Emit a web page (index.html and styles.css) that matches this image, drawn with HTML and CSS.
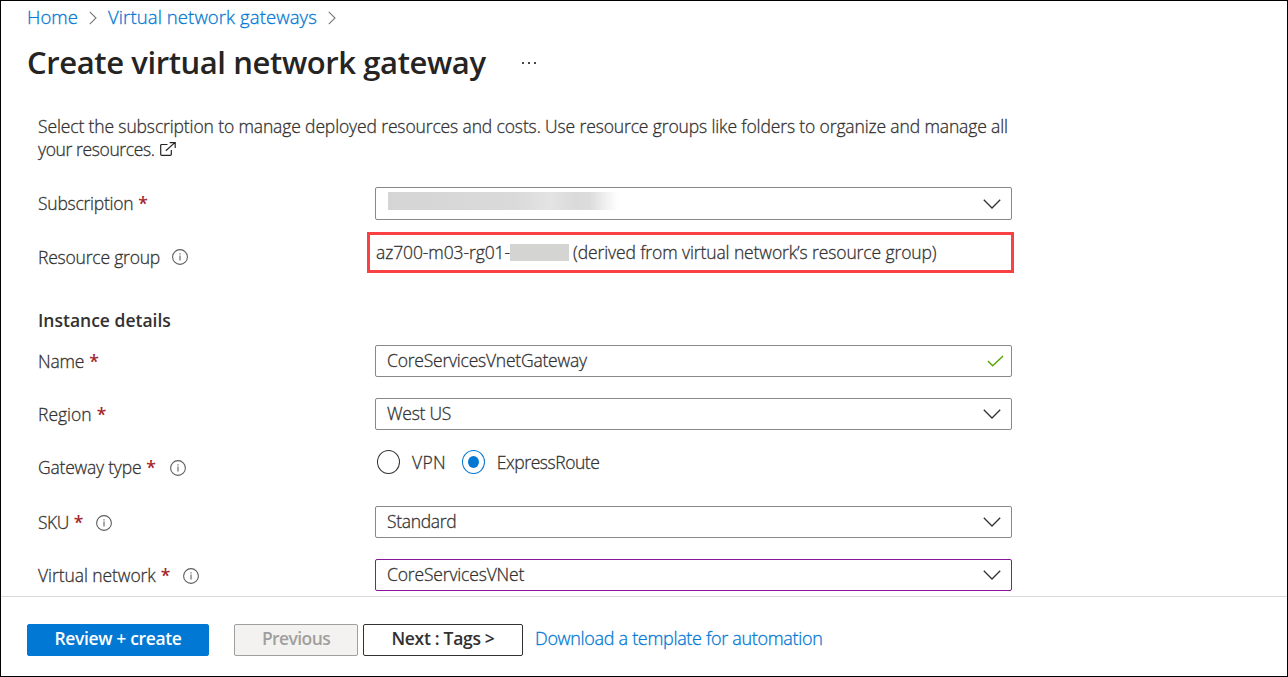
FILE: index.html
```html
<!DOCTYPE html>
<html lang="en">
<head>
<meta charset="utf-8">
<title>Create virtual network gateway</title>
<link rel="stylesheet" href="styles.css">
</head>
<body>
<svg class="defs" width="0" height="0">
  <symbol id="info" viewBox="0 0 16 16"><circle cx="8" cy="8" r="7.4" fill="none" stroke="#605e5c" stroke-width="1.1"/><path d="M8 6.6V11.6M8 4.2V5.5" stroke="#605e5c" stroke-width="1.1"/></symbol>
  <symbol id="down" viewBox="0 0 18 10"><path d="M.8.8 9 9 17.2.8" fill="none" stroke="#323130" stroke-width="1.3"/></symbol>
  <symbol id="crumb" viewBox="0 0 8 14"><path d="M.8.8 7 7 .8 13.2" fill="none" stroke="#7a7876" stroke-width="1.1"/></symbol>
</svg>
<div class="page">
  <nav class="crumbs">
    <a class="crumb-home">Home</a><svg class="crumb-sep"><use href="#crumb"/></svg><a class="crumb-list">Virtual network gateways</a><svg class="crumb-sep"><use href="#crumb"/></svg>
  </nav>
  <header class="heading">
    <h1 class="title">Create virtual network gateway</h1>
    <svg class="more" width="16" height="4" viewBox="0 0 16 4"><path d="M1 1h2v2H1zM7 1h2v2H7zM13 1h2v2h-2z" fill="#484644"/></svg>
  </header>
  <main class="form">
    <p class="intro"><span class="intro-first">Select the subscription to manage deployed resources and costs. Use resource groups like folders to organize and manage all</span><br><span class="intro-second">your resources.</span><svg class="external" width="16" height="14" viewBox="0 0 16 14"><path d="M7.5 2.5H1.7Q.7 2.5.7 3.5v8.8q0 1 1 1h8.6q1 0 1-1V8M5.8 8.8 14.6.9M9.7.7h5.5v5.2" fill="none" stroke="#252423" stroke-width="1.2"/></svg></p>
    <div class="row row-subscription">
      <div class="label"><span class="t-subscription">Subscription</span><span class="req">*</span></div>
      <div class="field"><span class="redacted-name"></span><svg class="down"><use href="#down"/></svg></div>
    </div>
    <div class="row row-group">
      <div class="label"><span class="t-group">Resource group</span><svg class="info"><use href="#info"/></svg></div>
      <div class="highlight"><span class="value t-rg">az700-m03-rg01-</span><span class="redacted-id"></span><span class="value t-derived">(derived from virtual network’s resource group)</span></div>
    </div>
    <h2 class="section">Instance details</h2>
    <div class="row row-name">
      <div class="label"><span class="t-name">Name</span><span class="req">*</span></div>
      <div class="field"><span class="value v-name">CoreServicesVnetGateway</span><svg class="check" viewBox="0 0 18 12"><path d="M1 6 6 11 17 .8" fill="none" stroke="#57a300" stroke-width="1.5"/></svg></div>
    </div>
    <div class="row row-region">
      <div class="label"><span class="t-region">Region</span><span class="req">*</span></div>
      <div class="field"><span class="value v-region">West US</span><svg class="down"><use href="#down"/></svg></div>
    </div>
    <div class="row row-type">
      <div class="label"><span class="t-type">Gateway type</span><span class="req">*</span><svg class="info"><use href="#info"/></svg></div>
      <div class="radios"><span class="radio"></span><span class="v-vpn">VPN</span><span class="radio radio-on"></span><span class="v-express">ExpressRoute</span></div>
    </div>
    <div class="row row-sku">
      <div class="label"><span class="t-sku">SKU</span><span class="req">*</span><svg class="info"><use href="#info"/></svg></div>
      <div class="field"><span class="value v-sku">Standard</span><svg class="down"><use href="#down"/></svg></div>
    </div>
    <div class="row row-vnet">
      <div class="label"><span class="t-vnet">Virtual network</span><span class="req">*</span><svg class="info"><use href="#info"/></svg></div>
      <div class="field field-changed"><span class="value v-vnet">CoreServicesVNet</span><svg class="down"><use href="#down"/></svg></div>
    </div>
  </main>
  <footer class="actions">
    <button class="btn btn-primary"><span class="b-review">Review + create</span></button>
    <button class="btn btn-disabled" disabled><span class="b-prev">Previous</span></button>
    <button class="btn btn-next"><span class="b-next">Next : Tags &gt;</span></button>
    <a class="download">Download a template for automation</a>
  </footer>
</div>
</body>
</html>
```
FILE: styles.css
```css
* { box-sizing: border-box; }
body { margin: 0; font-family: "Open Sans", "Noto Sans", sans-serif; font-size: 17.5px; font-weight: 300; -webkit-text-stroke: .28px; color: #323130; background: #fff; }
.defs { position: absolute; }
.page { height: 677px; border: 1px solid #000; display: flex; flex-direction: column; overflow: hidden; white-space: nowrap; }
a { color: #0078d4; }
.crumbs { display: flex; align-items: center; height: 34px; padding: 0 0 2px 26px; font-size: 18.5px; letter-spacing: .1px; }
.crumbs a { line-height: 30px; }
.crumb-sep { width: 8px; height: 14px; margin: 2px 11px 0 11px; }
.heading { display: flex; align-items: center; height: 56px; padding-left: 26px; }
.title { margin: 0; width: 494px; font-size: 31px; font-weight: 600; -webkit-text-stroke: 0; letter-spacing: -.4px; color: #252423; line-height: 54px; padding-bottom: 2px; }
.form { flex: 1; padding: 24px 0 0 37px; }
.intro { margin: 0; line-height: 23px; height: 46px; }
.intro-first { letter-spacing: -.13px; }
.intro-second { letter-spacing: -.38px; }
.external { margin-left: 5px; vertical-align: 0; }
.row { display: grid; grid-template-columns: 337px 637px; align-items: start; }
.label { display: flex; align-items: center; height: 32px; }
.req { color: #a4262c; font-weight: 600; -webkit-text-stroke: 0; margin-left: 5px; }
.info { width: 16px; height: 16px; margin-left: 13px; position: relative; top: 1px; }
.field { display: flex; align-items: center; justify-content: space-between; height: 32px; border: 1px solid #8a8886; border-radius: 2px; padding: 0 11px; }
.field-changed { border-color: #881798; }
.value { padding-bottom: 2px; }
.down { width: 18px; height: 10px; margin-right: -1px; }
.check { width: 17px; height: 12px; margin-right: -4px; }
.t-subscription { letter-spacing: -.25px; }
.t-type { letter-spacing: -.21px; }
.t-group { letter-spacing: -.21px; }
.t-rg { letter-spacing: -.1px; }
.t-derived { letter-spacing: -.11px; }
.t-name { letter-spacing: -.2px; }
.v-region { letter-spacing: -.27px; }
.t-sku { letter-spacing: -.5px; }
.t-vnet { letter-spacing: -.07px; }
.v-name { letter-spacing: -.22px; }
.v-vpn { letter-spacing: .3px; }
.v-express { letter-spacing: -.45px; }
.v-sku { letter-spacing: -.33px; }
.v-vnet { letter-spacing: -.16px; }
.row-subscription { margin-top: 26px; }
.row-subscription .field { height: 33px; }
.redacted-name { width: 232px; height: 18px; margin: -6px 0 0 1px; background: linear-gradient(90deg, #d5d5d5, #dadada 55%, #e4e4e4 70%, #dadada 81%, #dcdcdc 87%, #fff 99%); }
.row-group { margin-top: 12px; }
.row-group .label { margin-top: 9px; }
.row-group .info { margin-left: 12px; top: 0; }
.highlight { display: flex; align-items: center; height: 41px; width: 647px; margin-left: -8px; border: 3px solid #f94144; padding-left: 6px; }
.redacted-id { width: 59px; height: 17px; background: #d4d4d3; margin-right: 4px; }
.section { margin: 34px 0 0; font-size: 17.5px; line-height: 26px; font-weight: 600; -webkit-text-stroke: 0; }
.row-name { margin-top: 12px; }
.row-region { margin-top: 21px; }
.row-type { margin-top: 20px; }
.row-type .label { margin-top: 1px; }
.row-type .info { margin-left: 14px; }
.radios { display: flex; align-items: center; height: 24px; margin-left: 2px; }
.radio { width: 23px; height: 24px; border: 1px solid #323130; border-radius: 50%; margin-right: 12px; }
.radio-on { display: grid; place-items: center; border-color: #0078d4; margin-left: 16px; }
.radio-on::after { content: ""; width: 11px; height: 12px; border-radius: 50%; background: #0078d4; }
.row-sku { margin-top: 23px; }
.row-vnet { margin-top: 21px; }
.actions { display: flex; align-items: center; height: 80px; border-top: 1px solid #d9d9d9; padding: 6px 0 0 26px; }
.btn { height: 32px; padding: 0 0 3px; border: 1px solid #323130; border-radius: 2px; background: #fff; color: #323130; font: 600 17.5px "Open Sans", "Noto Sans", sans-serif; -webkit-text-stroke: 0; }
.btn-primary { width: 182px; border-color: #0078d4; background: #0078d4; color: #fff; letter-spacing: -.35px; }
.btn-disabled { width: 124px; margin-left: 25px; background: #f3f2f1; border-color: #a19f9d; color: #a19f9d; letter-spacing: -.6px; }
.btn-next { width: 160px; margin-left: 5px; letter-spacing: -.3px; }
.download { margin-left: 12px; padding-bottom: 3px; font-size: 18px; letter-spacing: -.32px; }
```
